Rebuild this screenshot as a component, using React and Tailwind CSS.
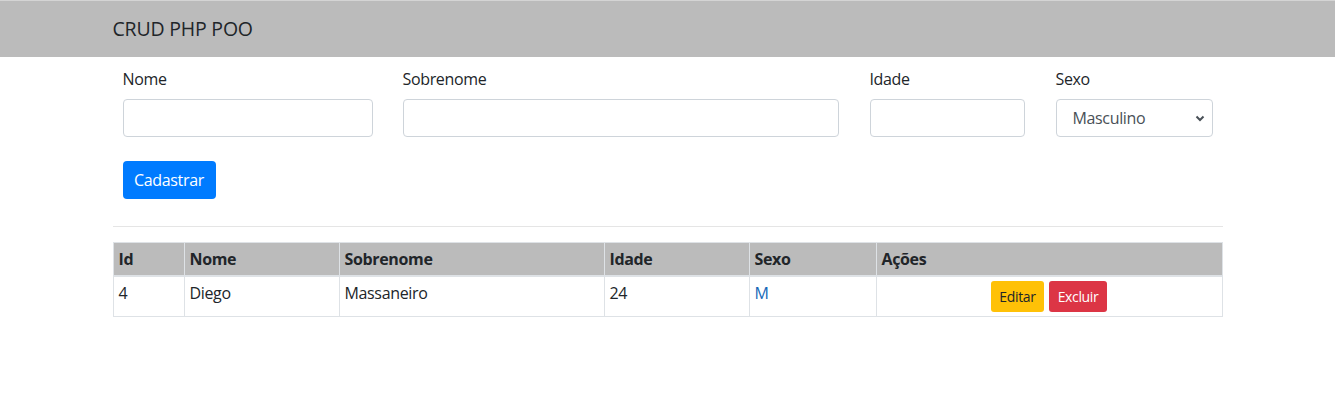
import React from 'react';

const font = { fontFamily: '"Open Sans", "Noto Sans", sans-serif' };

function Field({ label, width, className = '', children }) {
  return (
    <div className={`flex flex-col ${className}`} style={{ width }}>
      <label className="mb-2 leading-6 text-[16px] text-[#212529]">{label}</label>
      {children || (
        <input className="h-[38px] w-full rounded-[4px] border border-[#ced4da] bg-white px-3 text-[#495057] outline-none" />
      )}
    </div>
  );
}

export default function App() {
  const rows = [{ id: 4, nome: 'Diego', sobrenome: 'Massaneiro', idade: 24, sexo: 'M' }];

  return (
    <div className="min-h-screen bg-white text-[16px] tracking-[-0.35px] text-[#212529]" style={font}>
      {/* Navbar */}
      <nav className="h-[57px] border-t border-[#d4d4d4] bg-[#bbbbbb]">
        <div className="mx-auto flex h-full w-[1110px] items-center">
          <span className="text-[19.5px] leading-7 tracking-[-0.2px] text-[#212529]">CRUD PHP POO</span>
        </div>
      </nav>

      <div className="mx-auto w-[1110px]">
        {/* Form */}
        <form className="px-[10px] pt-[10px]">
          <div className="flex">
            <Field label="Nome" width={250} />
            <Field label="Sobrenome" width={436} className="ml-[30px]" />
            <Field label="Idade" width={155} className="ml-[31px]" />
            <Field label="Sexo" width={157} className="ml-[31px]">
              <div className="relative h-[38px] w-full">
                <select className="h-full w-full appearance-none rounded-[4px] border border-[#ced4da] bg-white pl-4 text-[16px] text-[#495057] outline-none">
                  <option>Masculino</option>
                  <option>Feminino</option>
                </select>
                <svg
                  className="pointer-events-none absolute right-[8px] top-[15px]"
                  width="10"
                  height="8"
                  viewBox="0 0 10 8"
                >
                  <path d="M1.5 2.5 L5 6 L8.5 2.5" fill="none" stroke="#495057" strokeWidth="2" />
                </svg>
              </div>
            </Field>
          </div>
          <button
            type="button"
            className="mt-6 h-[38px] w-[93px] rounded-[4px] bg-[#007bff] text-[16px] text-white"
          >
            Cadastrar
          </button>
        </form>

        <hr className="mt-[27px] mb-[15px] border-t border-[#e5e5e5]" />

        {/* Table */}
        <table className="w-full table-fixed border-collapse text-left">
          <thead>
            <tr className="bg-[#bbbbbb]">
              <th className="w-[71px] border border-b-2 border-[#dee2e6] px-[5px] py-[4px] font-bold">Id</th>
              <th className="w-[155px] border border-b-2 border-[#dee2e6] px-[5px] py-[4px] font-bold">Nome</th>
              <th className="w-[265px] border border-b-2 border-[#dee2e6] px-[5px] py-[4px] font-bold">Sobrenome</th>
              <th className="w-[145px] border border-b-2 border-[#dee2e6] px-[5px] py-[4px] font-bold">Idade</th>
              <th className="w-[127px] border border-b-2 border-[#dee2e6] px-[5px] py-[4px] font-bold">Sexo</th>
              <th className="border border-b-2 border-[#dee2e6] px-[5px] py-[4px] font-bold">Ações</th>
            </tr>
          </thead>
          <tbody>
            {rows.map((r) => (
              <tr key={r.id}>
                <td className="border border-[#dee2e6] px-[5px] py-[4px] align-top">{r.id}</td>
                <td className="border border-[#dee2e6] px-[5px] py-[4px] align-top">{r.nome}</td>
                <td className="border border-[#dee2e6] px-[5px] py-[4px] align-top">{r.sobrenome}</td>
                <td className="border border-[#dee2e6] px-[5px] py-[4px] align-top">{r.idade}</td>
                <td className="border border-[#dee2e6] px-[5px] py-[4px] align-top text-[#1668b8]">{r.sexo}</td>
                <td className="border border-[#dee2e6] px-[5px] py-[4px] align-top">
                  <div className="flex justify-center gap-[5px]">
                    <button className="h-[31px] w-[53px] rounded-[3px] bg-[#ffc107] text-[14px] text-[#212529]">Editar</button>
                    <button className="h-[31px] w-[58px] rounded-[3px] bg-[#dc3545] text-[14px] text-white">Excluir</button>
                  </div>
                </td>
              </tr>
            ))}
          </tbody>
        </table>
      </div>
    </div>
  );
}
